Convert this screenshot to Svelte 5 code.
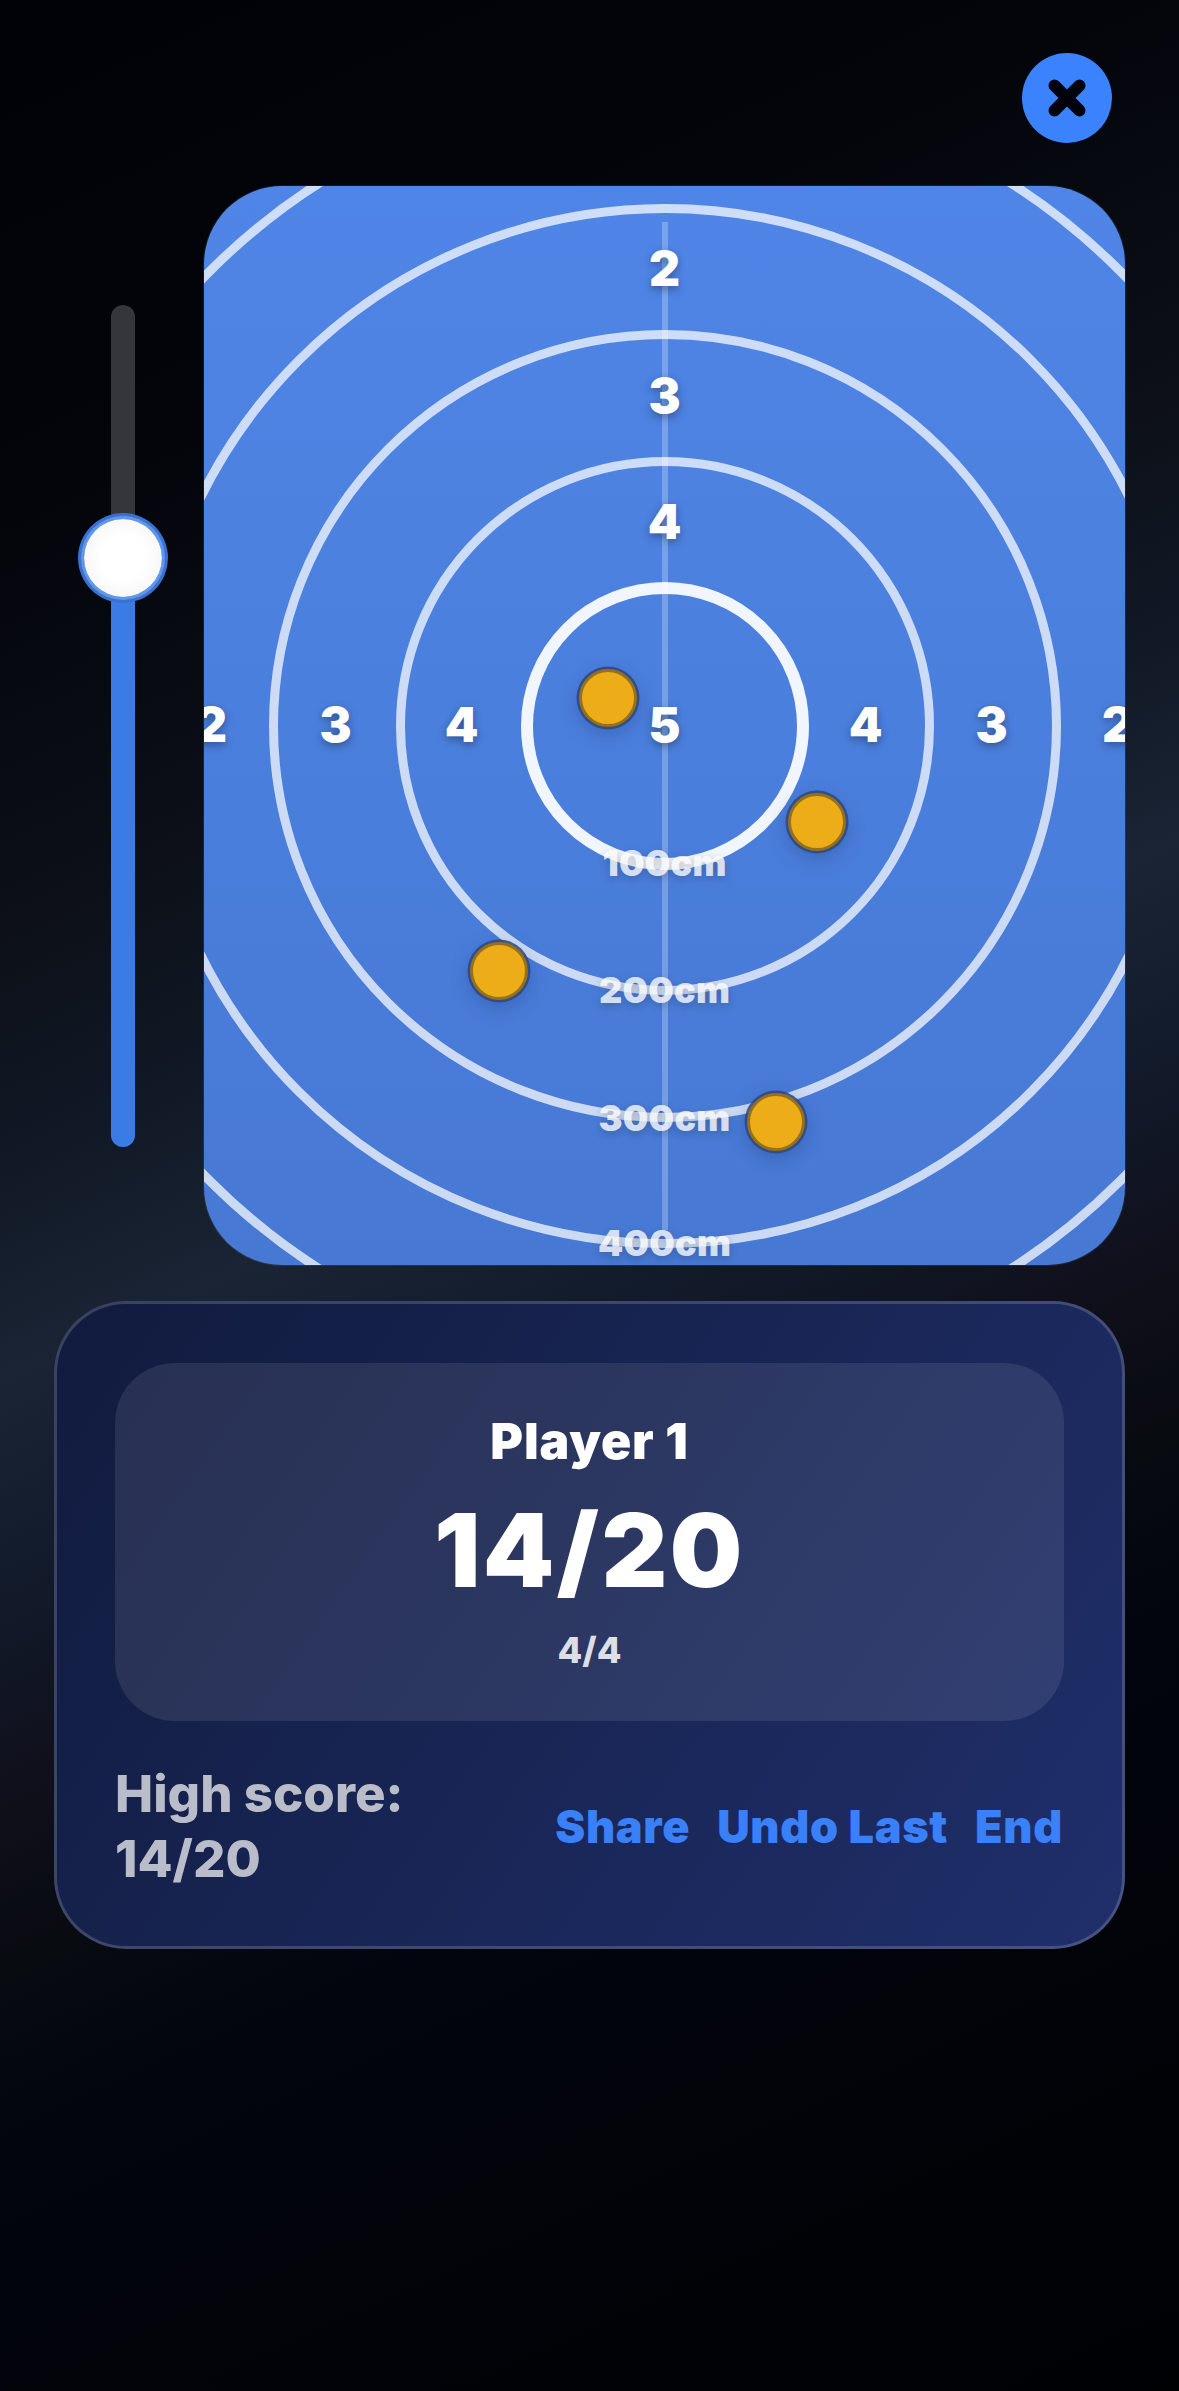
<script>
  const cx = 460.5, cy = 540;
  const rings = [
    { r: 144, w: 12, a: 0.92 },
    { r: 269, w: 9, a: 0.72 },
    { r: 396, w: 9, a: 0.72 },
    { r: 522, w: 9, a: 0.72 },
    { r: 648, w: 9, a: 0.72 }
  ];
  const scores = [
    { t: '5', x: 0, y: 0 },
    { t: '4', x: 0, y: -203 }, { t: '3', x: 0, y: -329 }, { t: '2', x: 0, y: -456 },
    { t: '4', x: -203, y: 0 }, { t: '3', x: -329, y: 0 }, { t: '2', x: -453, y: 0 },
    { t: '4', x: 201, y: 0 }, { t: '3', x: 327, y: 0 }, { t: '2', x: 453, y: 0 }
  ];
  const dists = [
    { t: '100cm', y: 137 }, { t: '200cm', y: 264 }, { t: '300cm', y: 392 }, { t: '400cm', y: 517 }
  ];
  const coins = [
    { x: 608, y: 698 }, { x: 817, y: 822 }, { x: 499, y: 971 }, { x: 776, y: 1122 }
  ];
</script>

<div class="page">
  <div class="top">
    <button class="close" aria-label="Close">
      <svg width="40" height="40" viewBox="0 0 40 40">
        <path d="M7.5 7.5 L32.5 32.5 M32.5 7.5 L7.5 32.5" stroke="#01030c" stroke-width="12" stroke-linecap="round" fill="none" />
      </svg>
    </button>
  </div>

  <div class="main">
    <div class="slider-col">
      <div class="track">
        <div class="fill"></div>
        <div class="thumb"></div>
      </div>
    </div>

    <div class="board">
      <div class="line"></div>
      {#each rings as ring}
        <div
          class="ring"
          style="left:{cx - ring.r}px;top:{cy - ring.r}px;width:{ring.r * 2}px;height:{ring.r * 2}px;border:{ring.w}px solid rgba(255,255,255,{ring.a})"
        ></div>
      {/each}
      {#each scores as s}
        <div class="score" style="left:{cx + s.x}px;top:{cy + s.y}px">{s.t}</div>
      {/each}
      {#each dists as d}
        <div class="dist" style="left:{cx}px;top:{cy + d.y}px">{d.t}</div>
      {/each}
      {#each coins as c}
        <div class="coin" style="left:{c.x - 204}px;top:{c.y - 186}px"></div>
      {/each}
    </div>
  </div>

  <div class="panel">
    <div class="inner">
      <div class="player">Player 1</div>
      <div class="total">14/20</div>
      <div class="count">4/4</div>
    </div>
    <div class="footer">
      <div class="high">High score:<br />14/20</div>
      <div class="actions">
        <span>Share</span>
        <span>Undo Last</span>
        <span>End</span>
      </div>
    </div>
  </div>
</div>

<style>
  :global(body) {
    margin: 0;
    background: #02030a;
  }
  .page {
    width: 1179px;
    height: 2391px;
    box-sizing: border-box;
    padding: 53px 54px 0;
    display: flex;
    flex-direction: column;
    font-family: Inter, "Liberation Sans", sans-serif;
    overflow: hidden;
    background: linear-gradient(
      155.4deg,
      #010208 0%,
      #03050b 18%,
      #0c0f17 31%,
      #111926 40%,
      #1a2434 47%,
      #121b2b 54%,
      #10101c 61%,
      #080b10 67%,
      #02050d 73%,
      #000103 100%
    );
  }
  .top {
    display: flex;
    justify-content: flex-end;
    padding-right: 13px;
  }
  .close {
    width: 90px;
    height: 90px;
    padding: 0;
    border: 0;
    border-radius: 50%;
    background: #3b82ff;
    display: flex;
    align-items: center;
    justify-content: center;
  }
  .main {
    display: flex;
    margin-top: 43px;
  }
  .slider-col {
    width: 150px;
    flex: none;
    padding: 119px 0 0 57px;
    box-sizing: border-box;
  }
  .track {
    position: relative;
    width: 24px;
    height: 842px;
    border-radius: 12px;
    background: #35363c;
  }
  .fill {
    position: absolute;
    left: 0;
    right: 0;
    bottom: 0;
    height: 589px;
    border-radius: 0 0 12px 12px;
    background: #3b7be6;
  }
  .thumb {
    position: absolute;
    left: 12px;
    top: 253px;
    width: 78px;
    height: 78px;
    transform: translate(-50%, -50%);
    border-radius: 50%;
    background: radial-gradient(circle, #ffffff 40%, #f0f0f1 100%);
    box-shadow: 0 0 0 3px #5e97ee, 0 0 0 6px #3a70d0;
  }
  .board {
    position: relative;
    width: 921px;
    height: 1079px;
    flex: none;
    border-radius: 78px;
    overflow: hidden;
    background: linear-gradient(180deg, #4f85e6 0%, #4779d4 100%);
    box-shadow: 0 0 0 1px rgba(255, 255, 255, 0.08);
  }
  .line {
    position: absolute;
    left: 458px;
    top: 36px;
    width: 6px;
    height: 1008px;
    background: rgba(255, 255, 255, 0.25);
  }
  .ring {
    position: absolute;
    box-sizing: border-box;
    border-radius: 50%;
  }
  .score,
  .dist {
    position: absolute;
    transform: translate(-50%, -50%);
    color: #fff;
    font-weight: 900;
    white-space: nowrap;
  }
  .score {
    margin-top: -1px;
    font-size: 48px;
    line-height: 1;
    text-shadow: 0 3px 8px rgba(0, 0, 0, 0.35);
  }
  .dist {
    font-size: 36px;
    line-height: 1;
    letter-spacing: 0.2px;
    color: rgba(255, 255, 255, 0.78);
    text-shadow: 0 3px 8px rgba(0, 0, 0, 0.2);
  }
  .coin {
    position: absolute;
    width: 58px;
    height: 58px;
    box-sizing: border-box;
    transform: translate(-50%, -50%);
    border-radius: 50%;
    background: #ecad19;
    border: 3px solid #96701a;
    box-shadow: 0 0 0 2.5px rgba(45, 70, 130, 0.85), 0 6px 20px rgba(20, 40, 90, 0.3);
  }
  .panel {
    width: 1071px;
    height: 648px;
    margin-top: 36px;
    box-sizing: border-box;
    padding: 59px 58px 0;
    border: 3px solid rgba(255, 255, 255, 0.17);
    border-radius: 72px;
    background: linear-gradient(125deg, #111b3e 0%, #202f6b 100%);
    background-origin: border-box;
  }
  .inner {
    height: 358px;
    box-sizing: border-box;
    padding-top: 49px;
    border-radius: 60px;
    background: rgba(255, 255, 255, 0.09);
    display: flex;
    flex-direction: column;
    align-items: center;
    color: #fff;
    text-align: center;
  }
  .player {
    font-size: 50px;
    line-height: 58px;
    font-weight: 900;
    letter-spacing: 0.8px;
  }
  .total {
    margin-top: 25px;
    font-size: 102px;
    line-height: 110px;
    font-weight: 900;
    letter-spacing: 2.5px;
  }
  .count {
    margin-top: 23px;
    font-size: 36px;
    line-height: 44px;
    font-weight: 800;
    color: rgba(255, 255, 255, 0.85);
  }
  .footer {
    display: flex;
    justify-content: space-between;
    align-items: center;
    margin-top: 40px;
  }
  .high {
    font-size: 51px;
    line-height: 65px;
    font-weight: 800;
    color: #b9bcc9;
  }
  .actions {
    display: flex;
    gap: 27px;
    padding-right: 1px;
    font-size: 45px;
    font-weight: 900;
    letter-spacing: 0.7px;
    color: #3a80f8;
  }
</style>
